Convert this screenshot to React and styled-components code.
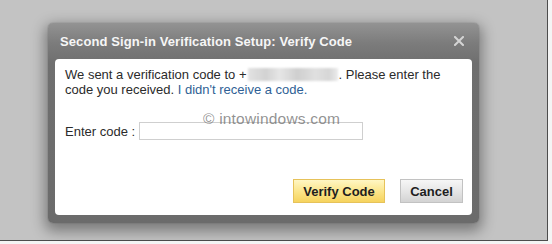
import React from 'react';
import styled, { createGlobalStyle } from 'styled-components';

const GlobalStyle = createGlobalStyle`
  html, body {
    margin: 0;
    padding: 0;
    background: #f4f4f4;
  }
  body {
    font-family: "Liberation Sans", Arial, sans-serif;
  }
`;

const Frame = styled.div`
  width: 548px;
  height: 241px;
  box-sizing: border-box;
  padding: 23px 0 0 48px;
  background: #c3c3c3;
  border-right: 1px solid #4d4d4d;
  border-bottom: 1px solid #4d4d4d;
`;

const Dialog = styled.div`
  width: 431px;
  box-sizing: border-box;
  padding: 0 7px 8px 7px;
  border-radius: 5px;
  background: linear-gradient(#939393 0px, #7c7c7c 20px, #6f6f6f 40px, #6b6b6b 100%);
  box-shadow: 0 5px 14px 3px rgba(0, 0, 0, 0.38), 0 0 1px rgba(0, 0, 0, 0.5);
`;

const TitleBar = styled.div`
  height: 36px;
  display: flex;
  align-items: center;
  justify-content: space-between;
  padding: 0 8px 0 5px;
`;

const Title = styled.h2`
  margin: 0;
  font-size: 13px;
  font-weight: bold;
  color: #f6f6f6;
  letter-spacing: 0.1px;
`;

const Close = styled.span`
  display: flex;
  width: 10px;
  height: 10px;
`;

const Body = styled.div`
  position: relative;
  height: 156px;
  box-sizing: border-box;
  background: #fff;
  border-radius: 4px;
  padding: 8px 9px 12px 10px;
  display: flex;
  flex-direction: column;
`;

const Message = styled.p`
  margin: 0;
  font-size: 13px;
  line-height: 15px;
  color: #2b2b2b;
`;

const Hidden = styled.span`
  display: inline-block;
  width: 90px;
  height: 13px;
  margin: 0 1px;
  vertical-align: -2px;
  background: linear-gradient(90deg, #e2e2e2, #d2d2d2 20%, #e6e6e6 35%, #cfcfcf 55%, #e0e0e0 75%, #d6d6d6 90%, #ececec);
  filter: blur(0.8px);
`;

const Link = styled.a`
  color: #2f5f95;
  text-decoration: none;
`;

const CodeRow = styled.div`
  display: flex;
  align-items: center;
  gap: 4px;
  margin-top: 25px;
  font-size: 13px;
  color: #2b2b2b;
`;

const CodeInput = styled.input`
  width: 224px;
  height: 18px;
  box-sizing: border-box;
  border: 1px solid #cfcfcf;
  padding: 0 3px;
  margin: 0;
  font-size: 12px;
`;

const Watermark = styled.span`
  position: absolute;
  left: 148px;
  top: 51px;
  font-size: 15.5px;
  color: rgba(110, 110, 110, 0.75);
  letter-spacing: 0.2px;
  pointer-events: none;
`;

const Actions = styled.div`
  margin-top: auto;
  display: flex;
  justify-content: flex-end;
  gap: 15px;
`;

const Button = styled.button`
  height: 24px;
  box-sizing: border-box;
  padding: 0;
  width: ${(p) => p.$w}px;
  font-family: "Liberation Sans", Arial, sans-serif;
  font-size: 13px;
  font-weight: bold;
  color: #1e1e1e;
  border: 1px solid ${(p) => (p.$primary ? '#e6c25a' : '#c2c2c2')};
  background: ${(p) =>
    p.$primary
      ? 'linear-gradient(#fff6c4, #fbe487 55%, #f6d35e)'
      : 'linear-gradient(#f6f6f6, #e4e4e4 55%, #d3d3d3)'};
`;

const CloseIcon = () => (
  <svg width="10" height="10" viewBox="0 0 10 10">
    <path d="M1 1 L9 9 M9 1 L1 9" stroke="#d4d4d4" strokeWidth="2" strokeLinecap="square" />
  </svg>
);

export default function App() {
  return (
    <>
      <GlobalStyle />
      <Frame>
        <Dialog>
          <TitleBar>
            <Title>Second Sign-in Verification Setup: Verify Code</Title>
            <Close>
              <CloseIcon />
            </Close>
          </TitleBar>
          <Body>
            <Message>
              We sent a verification code to +<Hidden />. Please enter the code you received.{' '}
              <Link href="#">I didn't receive a code.</Link>
            </Message>
            <CodeRow>
              <label htmlFor="code">Enter code :</label>
              <CodeInput id="code" type="text" />
            </CodeRow>
            <Watermark>© intowindows.com</Watermark>
            <Actions>
              <Button $primary $w={92}>Verify Code</Button>
              <Button $w={63}>Cancel</Button>
            </Actions>
          </Body>
        </Dialog>
      </Frame>
    </>
  );
}
